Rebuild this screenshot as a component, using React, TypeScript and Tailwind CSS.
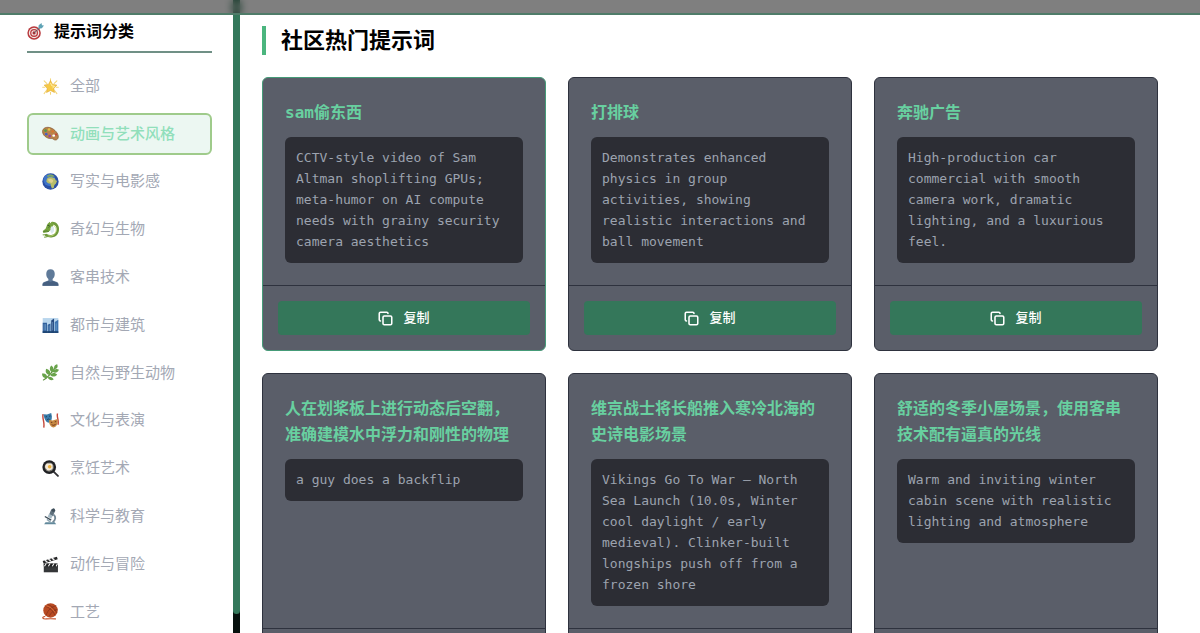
import type { ReactNode } from "react"
import { Copy } from "lucide-react"

interface Category {
    label: string
    icon: ReactNode
}

interface Prompt {
    title: string
    text: string
    highlighted?: boolean
}

interface PictogramProps {
    /** Shapes drawn on a 24 unit grid */
    children: ReactNode
}

/** Small colour pictogram shown before a label. */
function Pictogram({ children }: PictogramProps) {
    return (
        <svg viewBox="0 0 24 24" className="size-[17px] shrink-0" fill="none" aria-hidden="true">
            {children}
        </svg>
    )
}

const targetIcon = (
    <Pictogram>
        <circle cx="10" cy="14" r="9.5" fill="#b8393d" />
        <circle cx="10" cy="14" r="7.4" fill="#f4e9e6" />
        <circle cx="10" cy="14" r="5.6" fill="#b8393d" />
        <circle cx="10" cy="14" r="3.8" fill="#f4e9e6" />
        <circle cx="10" cy="14" r="2.2" fill="#a82f35" />
        <path d="M10 14 19 6" stroke="#4b5b62" strokeWidth="1.2" />
        <path d="m16 8 .5-5L20.5 0l.6 3 2.900.7L21 7.500z" fill="#5fa3b5" />
    </Pictogram>
)

const categories: Category[] = [
    {
        label: "全部",
        icon: (
            <Pictogram>
                <path d="M12 5V1M7 8 3 4M17 8l4-4M4 13H1M20 13h3M12 20v3M6 18l-3 4M18 18l3 4" stroke="#f3d679" strokeWidth="1.5" strokeLinecap="round" />
                <path d="m12 3.500 2.900 5.500 6.100 1-4.300 4.400.9 6.100-5.600-2.800-5.600 2.800.9-6.100L3 10l6.100-1z" fill="#f6c945" stroke="#dfa62f" strokeWidth=".8" strokeLinejoin="round" />
                <path d="m12 7 1.800 4 4 .8-3 2.200" stroke="#fff0a8" strokeWidth="1.4" />
            </Pictogram>
        ),
    },
    {
        label: "动画与艺术风格",
        icon: (
            <Pictogram>
                <path d="M1 7.500C2.500 3 9 2 14.500 5c5.500 3 9.500 9 8.300 13-1 3.500-4.600 4-6.800 2-1.500-1.400-3.600-.6-5.500-1C4.500 18-.3 12.500 1 7.500z" fill="#b9824a" stroke="#84532b" strokeWidth="1" />
                <ellipse cx="16.5" cy="15" rx="2" ry="1.500" fill="#fff" />
                <circle cx="5" cy="8" r="1.900" fill="#4f9c4a" />
                <circle cx="10" cy="6.300" r="1.800" fill="#e2c445" />
                <circle cx="15" cy="9" r="1.700" fill="#d9762f" />
                <circle cx="6" cy="13" r="1.900" fill="#4b5fc0" />
                <circle cx="10.800" cy="15.700" r="1.900" fill="#9442a2" />
                <circle cx="19.800" cy="13.500" r="1.400" fill="#c8413a" />
            </Pictogram>
        ),
    },
    {
        label: "写实与电影感",
        icon: (
            <Pictogram>
                <circle cx="12" cy="12" r="11.500" fill="#2b50a4" />
                <circle cx="10.500" cy="10" r="8.500" fill="#3f74c9" />
                <path d="M7 8c2-2 5-2.500 8-1.500l3 1 1.500 3 2 .5-2 4-2 2-1 4-2.500 1-1.500-4-.5-3-3.500-.5L6 12z" fill="#b7bd6a" />
                <path d="m8 9 4-1 4 2-1 3-2 1-3-2z" fill="#dfd08e" />
                <path d="m7 3.500 4-1.500 4 .5 3 2-4 1-3-1-3 1.500z" fill="#7fa563" />
            </Pictogram>
        ),
    },
    {
        label: "奇幻与生物",
        icon: (
            <Pictogram>
                <path d="M6 20c5 2.500 13 2 15.500-4.500C24 8.500 20 3 14.500 3" stroke="#6f9a3c" strokeWidth="3.600" strokeLinecap="round" />
                <path d="M9 21c5 .8 9-1 10.500-5.500 1.500-5-1-9-5-10" stroke="#c8dc82" strokeWidth="1.100" />
                <path d="m8 4 3-3 1 2 3-2 1 3-1 5-3 4-4 3-6 1-1-3 4-3 2-5z" fill="#77a43f" />
                <path d="m7 6 4 1-2 3M2 15l4-1 4 1" stroke="#46702c" strokeWidth="1" />
                <path d="m12 10 2-3 3 2v5l-3 4-2-3z" fill="#dceaf0" />
                <path d="M1 20c2-2 3 1 5-1M3 23c2-1 3 0 5-1" stroke="#6f9a3c" strokeWidth="1.500" />
                <circle cx="9.500" cy="6" r=".8" fill="#2c4521" />
            </Pictogram>
        ),
    },
    {
        label: "客串技术",
        icon: (
            <Pictogram>
                <path d="M12 .5c4 0 6 2.700 6 6.500 0 3-1.200 5.500-3 7v2.300l6 2.200c2 .8 2.500 2.500 2.500 5H.5c0-2.500.5-4.200 2.500-5l6-2.200V14c-1.800-1.500-3-4-3-7 0-3.800 2-6.500 6-6.500z" fill="#5f7a99" />
                <path d="M1 23.500c0-2.500.7-4 2.500-4.600L9 17c2 1.500 4 1.500 6 0l5.500 1.900c1.800.6 2.500 2.100 2.500 4.600z" fill="#465f80" />
            </Pictogram>
        ),
    },
    {
        label: "都市与建筑",
        icon: (
            <Pictogram>
                <path d="M1 1.500h22v21H1z" fill="#b9d6ed" />
                <path d="M1 8h6v14.500H1zM8 11l4-2v13.500H8z" fill="#315f9b" />
                <path d="M13 5l4-3v20.500h-4z" fill="#274a80" />
                <path d="M18 7l5-3v18.500h-5z" fill="#3e73b0" />
                <path d="M3 10v9M5 10v9M10 12v8M15 7v12M20 9v10" stroke="#8bb9df" strokeWidth=".7" />
                <path d="M1 20h22v2.500H1z" fill="#1d4573" />
            </Pictogram>
        ),
    },
    {
        label: "自然与野生动物",
        icon: (
            <Pictogram>
                <path d="M2 22.500C8 20 14 12 20.500 3" stroke="#5c8f3c" strokeWidth="1.600" strokeLinecap="round" />
                <path d="M18 7c-2-2.500-.5-5.500 3.500-6.500 1.500 4 0 6.500-3.500 6.500zM14.500 11.500c-4-2-4.500-6-1.500-9.500 4 2.500 4.500 6.500 1.500 9.500zM11 15.800c-5-1-7-4.800-5-9 5 1.200 7 5 5 9zM7 20c-4.500.5-7-2-7-6.500 5-.5 8 2 7 6.500zM15 11c2-4 5.500-5 9-3-2 4-5.500 5.500-9 3zM11.500 15.500c3.500-3.500 7-3.500 10-.5-3.500 3.500-7 3.500-10 .5zM8 19c3.500-2 6.500-.5 8.500 3-3.500 2-6.500.5-8.500-3z" fill="#68a34a" />
            </Pictogram>
        ),
    },
    {
        label: "文化与表演",
        icon: (
            <Pictogram>
                <path d="M1.500 3C0 10 4 13 2.500 22M22 2c-2 5 2.500 9 .5 16" stroke="#c5483b" strokeWidth="2" />
                <path d="m2 3 5 .5 6-2 1 5c0 5-1.500 8-5 8.500C5 14 3 9 2 3z" fill="#397ba8" />
                <path d="m5 7 2-.5M10 6l2-.5M7 11.500c1-2 3-2 4-.5" stroke="#173c5b" strokeWidth="1.300" />
                <path d="m10 11 5 1 7-2c1 6-1 11-5.500 12C12 21.500 9.500 17 10 11z" fill="#c78a43" />
                <path d="m12.500 14.500 2 .3M18 14l2-.6M13.500 17.500c2 2 4.500 1.500 6-.7" stroke="#713820" strokeWidth="1.400" />
            </Pictogram>
        ),
    },
    {
        label: "烹饪艺术",
        icon: (
            <Pictogram>
                <path d="m16 16 6.500 6.500" stroke="#333337" strokeWidth="2.600" strokeLinecap="round" />
                <circle cx="10.200" cy="10" r="9.700" fill="#202124" />
                <circle cx="10.200" cy="10" r="6.500" fill="#77756f" />
                <path d="M5 7c2-3 4-1.500 6-2 3-1 4.500 2 4 4 1 3-1 5-3.500 5-2 2-4.500.5-5-1C4 11.500 4 9 5 7z" fill="#f5ead9" />
                <circle cx="10.800" cy="9.500" r="2.500" fill="#eeb23b" />
            </Pictogram>
        ),
    },
    {
        label: "科学与教育",
        icon: (
            <Pictogram>
                <path d="m13 2 4-1.500 2 3-4 8-5-2.500z" fill="#60717d" />
                <path d="m10 8 5 3-2 4-5-2.500z" fill="#a6b9c4" />
                <path d="M16 9c4 3 3.500 8-1 11" stroke="#738794" strokeWidth="2.600" />
                <path d="m4 12 9 5" stroke="#3d4c57" strokeWidth="2" />
                <path d="M5 20h13l2 3H3z" fill="#62899b" />
                <path d="m7 16 5 4" stroke="#91a8b4" strokeWidth="2" />
                <circle cx="16" cy="3" r="2.300" fill="#3f4e59" />
            </Pictogram>
        ),
    },
    {
        label: "动作与冒险",
        icon: (
            <Pictogram>
                <path d="M2.500 11h20v12h-20z" fill="#343638" />
                <path d="m1 7 20-6 1.200 3.500-20 6z" fill="#242526" />
                <path d="m4 6 3.500 2.500M9 4.600l3.500 2.400M14 3.100l3.500 2.400" stroke="#f2f2f2" strokeWidth="2" />
                <path d="M2.500 10.500h20v4h-20z" fill="#1d1e1f" />
                <path d="m6 10.500-2.500 4M11.500 10.500 9 14.500M17 10.500l-2.500 4M22 10.500l-2 4" stroke="#f2f2f2" strokeWidth="1.600" />
                <path d="M5 18.500h15" stroke="#4a4d4f" strokeWidth=".7" />
            </Pictogram>
        ),
    },
    {
        label: "工艺",
        icon: (
            <Pictogram>
                <circle cx="12" cy="10.500" r="10.200" fill="#b84a22" />
                <path d="M5 5c5 1 10 5 13 12M8 2c6 2 10 6 13 12M20 4C14 5 8 10 6 17M22 9c-5 1-9 4-12 10" stroke="#7c2e19" strokeWidth=".9" />
                <path d="M6 4c5 1 9 4 12 9" stroke="#e4793e" strokeWidth="1" />
                <path d="M4 19c-5 1-3 4 2 3.500 5-.5 7-.5 13 0" stroke="#c6532c" strokeWidth="1.600" strokeLinecap="round" />
            </Pictogram>
        ),
    },
]

const activeCategory = "动画与艺术风格"

const prompts: Prompt[] = [
    {
        title: "sam偷东西",
        text: "CCTV-style video of Sam Altman shoplifting GPUs; meta-humor on AI compute needs with grainy security camera aesthetics",
        highlighted: true,
    },
    {
        title: "打排球",
        text: "Demonstrates enhanced physics in group activities, showing realistic interactions and ball movement",
    },
    {
        title: "奔驰广告",
        text: "High-production car commercial with smooth camera work, dramatic lighting, and a luxurious feel.",
    },
    {
        title: "人在划桨板上进行动态后空翻，准确建模水中浮力和刚性的物理",
        text: "a guy does a backflip",
    },
    {
        title: "维京战士将长船推入寒冷北海的史诗电影场景",
        text: "Vikings Go To War — North Sea Launch (10.0s, Winter cool daylight / early medieval). Clinker-built longships push off from a frozen shore",
    },
    {
        title: "舒适的冬季小屋场景，使用客串技术配有逼真的光线",
        text: "Warm and inviting winter cabin scene with realistic lighting and atmosphere",
    },
]

function Sidebar() {
    return (
        <aside className="flex h-screen w-60 shrink-0">
            <div className="flex min-w-0 flex-1 flex-col pt-4 pr-[21px] pl-[27px]">
                <h2 className="mb-3 flex items-center gap-[10px] border-b-2 border-[#709086] pb-1 text-base leading-[31px] font-bold text-black">
                    {targetIcon}
                    提示词分类
                </h2>
                <nav aria-label="提示词分类" className="flex flex-1 flex-col justify-between">
                    {categories.map(({ label, icon }) => (
                        <button
                            key={label}
                            type="button"
                            aria-pressed={label === activeCategory}
                            className={`flex h-[42px] shrink-0 items-center gap-[11px] rounded-md border-2 px-[13px] text-[15px] ${label === activeCategory
                                    ? "border-[#9fcb8b] bg-[#ecf7f2] font-medium text-[#91dfbb]"
                                    : "border-transparent font-normal text-[#a3a8b4]"
                                }`}
                        >
                            {icon}
                            {label}
                        </button>
                    ))}
                </nav>
            </div>
            <div className="w-[7px] bg-[#07110e]" aria-hidden="true">
                <div className="h-[97%] rounded-b bg-[#34785b]" />
            </div>
        </aside>
    )
}

function PromptCard({ title, text, highlighted }: Prompt) {
    return (
        <article
            className={`flex flex-col overflow-hidden rounded-md border bg-[#5a5e69] ${highlighted ? "border-[#459b78]" : "border-[#2e323e]"
                }`}
        >
            <div className="flex-1 p-[22px]">
                <h3 className="mb-[11px] text-base leading-[26px] font-bold text-[#68d0a0]">{title}</h3>
                <p className="rounded-md bg-[#2c2d34] px-[11px] pt-[10px] pb-[11px] text-[13px] leading-[21px] text-[#9ca3af]">
                    {text}
                </p>
            </div>
            <div className="border-t border-[#2e323e] p-[15px]">
                <button
                    type="button"
                    className="flex h-[34px] w-full items-center justify-center gap-[10px] rounded bg-[#34775a] text-[13px] font-medium text-white"
                >
                    <Copy size={15} strokeWidth={2.5} aria-hidden="true" />
                    复制
                </button>
            </div>
        </article>
    )
}

export default function App() {
    return (
        <div className="flex h-screen overflow-hidden bg-white font-['DejaVu_Sans_Mono','Noto_Sans_CJK_SC',monospace]">
            {/* Translucent top bar, the page shows through it */}
            <header className="fixed inset-x-0 top-0 z-10 h-[15px] border-b-2 border-[#4f7c69] bg-black/50 backdrop-blur-xs" />
            <Sidebar />
            <main className="min-w-0 flex-1 overflow-hidden pt-[26px] pr-[42px] pl-[22px]">
                <h1 className="mb-[22px] border-l-4 border-[#4bb57e] pl-[15px] text-[22px] leading-[29px] font-bold text-black">
                    社区热门提示词
                </h1>
                <div className="grid grid-cols-3 gap-[22px]">
                    {prompts.map((prompt) => (
                        <PromptCard key={prompt.title} {...prompt} />
                    ))}
                </div>
            </main>
        </div>
    )
}
